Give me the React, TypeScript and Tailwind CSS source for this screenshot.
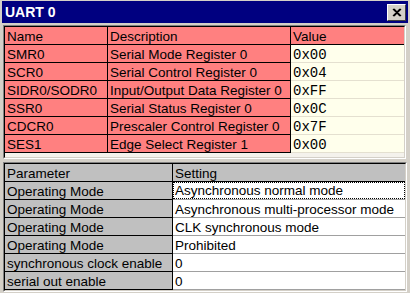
import React from "react";

const upper = [
  ["SMR0", "Serial Mode Register 0", "0x00"],
  ["SCR0", "Serial Control Register 0", "0x04"],
  ["SIDR0/SODR0", "Input/Output Data Register 0", "0xFF"],
  ["SSR0", "Serial Status Register 0", "0x0C"],
  ["CDCR0", "Prescaler Control Register 0", "0x7F"],
  ["SES1", "Edge Select Register 1", "0x00"],
];

const lower = [
  ["Operating Mode", "Asynchronous normal mode"],
  ["Operating Mode", "Asynchronous multi-processor mode"],
  ["Operating Mode", "CLK synchronous mode"],
  ["Operating Mode", "Prohibited"],
  ["synchronous clock enable", "0"],
  ["serial out enable", "0"],
];

export default function App() {
  return (
    <div
      className="w-[410px] h-[293px] bg-[#d4d0c8] overflow-hidden flex flex-col pt-[1px] px-[2px] text-[13.5px] leading-none text-black"
      style={{ fontFamily: '"Liberation Sans", Arial, sans-serif' }}
    >
      {/* Title bar */}
      <div className="h-[22px] bg-[#000080] flex items-center justify-between pl-[3px] pr-[2px] shrink-0">
        <span className="text-white font-bold text-[14px]">UART 0</span>
        <div className="w-[19px] h-[17px] bg-[#d4d0c8] border border-t-white border-l-white border-r-[#404040] border-b-[#404040] flex items-center justify-center">
          <svg width="10" height="9" viewBox="0 0 10 9">
            <path d="M1 1 L8 8 M2 1 L9 8 M8 1 L1 8 M9 1 L2 8" stroke="#000" strokeWidth="1.2" />
          </svg>
        </div>
      </div>

      {/* Upper table */}
      <div className="mt-[2px] ml-[1px] mr-[2px] h-[134px] border border-t-[#808080] border-l-[#808080] border-r-white border-b-white shrink-0">
        <div className="h-full border border-black bg-[#f4f2ec] border-b-[#d4d0c8] border-r-[#d4d0c8]">
          <div className="grid grid-cols-[103px_183px_1fr]">
            {[["Name", "Description", "Value"], ...upper].map((r, i) => (
              <React.Fragment key={i}>
                <div className="h-[18px] bg-[#ff8080] border-r border-b border-black flex items-center pl-[2px] pt-[2px] whitespace-nowrap overflow-hidden">
                  {r[0]}
                </div>
                <div className="h-[18px] bg-[#ff8080] border-r border-b border-black flex items-center pl-[2px] pt-[2px] whitespace-nowrap overflow-hidden">
                  {r[1]}
                </div>
                {i === 0 ? (
                  <div className="h-[18px] bg-[#ff8080] border-b border-black flex items-center pl-[2px] pt-[2px]">
                    {r[2]}
                  </div>
                ) : (
                  <div
                    className="h-[18px] bg-[#ffffec] border-b border-[#e4e0d0] flex items-center pl-[2px] pt-[2px] text-[14px]"
                    style={{ fontFamily: '"Liberation Mono", "Courier New", monospace' }}
                  >
                    {r[2]}
                  </div>
                )}
              </React.Fragment>
            ))}
          </div>
        </div>
      </div>

      {/* Lower table */}
      <div className="mt-[3px] ml-[1px] mr-[1px] flex-1 border border-t-[#808080] border-l-[#808080] border-r-white border-b-white">
        <div className="h-full border border-black border-b-[#d4d0c8] border-r-[#d4d0c8] bg-[#d4d0c8]">
          <div className="grid grid-cols-[168px_1fr]">
            <div className="h-[18px] bg-[#c0c0c0] border-r border-b border-black flex items-center pl-[2px] pt-[2px]">
              Parameter
            </div>
            <div className="h-[18px] bg-[#c0c0c0] border-b border-black flex items-center pl-[2px] pt-[2px]">
              Setting
            </div>
            {lower.map((r, i) => (
              <React.Fragment key={i}>
                <div className="h-[18px] bg-[#c0c0c0] border-r border-b border-black flex items-center pl-[2px] pt-[2px] whitespace-nowrap overflow-hidden">
                  {r[0]}
                </div>
                <div className="h-[18px] bg-white border-b border-[#a0a0a0] flex items-center whitespace-nowrap overflow-hidden">
                  {i === 0 ? (
                    <div className="h-full w-full border border-dotted border-black flex items-center pl-[1px] pt-[1px]">
                      {r[1]}
                    </div>
                  ) : (
                    <span className="pl-[2px] pt-[2px]">{r[1]}</span>
                  )}
                </div>
              </React.Fragment>
            ))}
          </div>
        </div>
      </div>
      <div className="h-[3px] shrink-0" />
    </div>
  );
}
